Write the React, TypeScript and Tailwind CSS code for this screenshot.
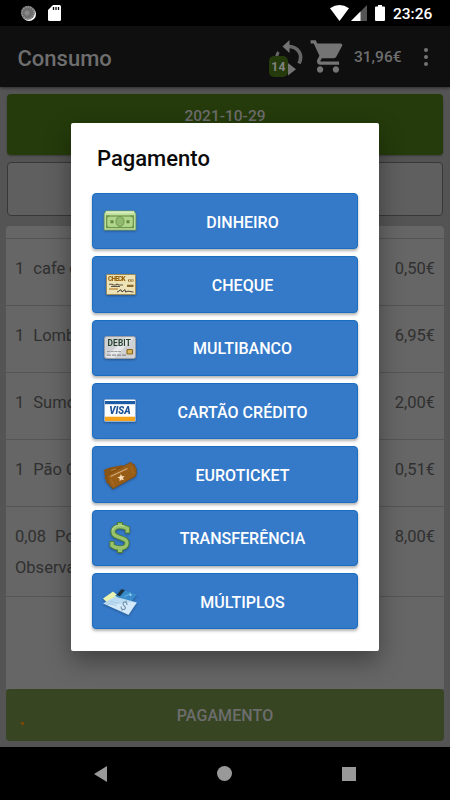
import type { ReactNode } from "react";

type Item = {
  qty: string;
  name: string;
  price: string;
  note?: string;
};

const items: Item[] = [
  { qty: "1", name: "cafe c", price: "0,50€" },
  { qty: "1", name: "Lombo", price: "6,95€" },
  { qty: "1", name: "Sumo", price: "2,00€" },
  { qty: "1", name: "Pão C", price: "0,51€" },
  { qty: "0,08", name: "Polvo", price: "8,00€", note: "Observação" },
];

const PayIcon = ({ children }: { children: ReactNode }) => (
  <svg width="36" height="36" viewBox="0 0 36 36" className="shrink-0 drop-shadow-[0_1px_1px_rgba(0,0,0,0.3)]">
    {children}
  </svg>
);

const CashIcon = () => (
  <PayIcon>
    <path d="M4 8h28l1.800 3v16H2.200V11z" fill="#c3e2a2" stroke="#7fa860" strokeWidth="0.8" />
    <path d="M4 9.200h28" stroke="#d9efc0" strokeWidth="1.600" />
    <rect x="4.600" y="13" width="26.800" height="11.600" fill="#b0d58b" stroke="#6d984d" strokeWidth="1.300" />
    <path d="M4.500 12.500h3.500l-3.500 3zM31.500 12.500H28l3.500 3zM4.500 25H8l-3.500-3zM31.500 25H28l3.500-3z" fill="#6d984d" />
    <ellipse cx="18" cy="18.500" rx="4" ry="5" fill="#91b970" stroke="#6d984d" />
    <path d="M8.500 17.200h3v3h-3zM24.500 17.200h3v3h-3z" fill="#5f8943" />
  </PayIcon>
);

const CheckIcon = () => (
  <PayIcon>
    <rect x="4.500" y="7.500" width="29" height="20" rx="0.800" fill="#eee2b7" stroke="#a18b55" />
    <text x="6" y="14" fontSize="6.300" fontWeight="900" textLength="17.500" fill="#955f08" fontFamily="Roboto, sans-serif">
      CHECK
    </text>
    <path d="M26 13.500h5.500M25 18.800h6.500" stroke="#8a692d" strokeWidth="2.200" />
    <path d="M27 13.500h1.200M29.500 13.500h1.200" stroke="#eee2b7" />
    <path d="M7 17.200h3l1 .8h3l1-.8 2 .8h4M9 19.500h9" stroke="#5d5445" strokeWidth="1.100" fill="none" />
    <path d="M7 22h9" stroke="#b68434" strokeWidth="1.200" />
    <path d="M15 25.200l4-2.500 1 2.200 3-2.300.5 2.500 2.500-1 5.500 1" stroke="#47423a" fill="none" />
  </PayIcon>
);

const DebitIcon = () => (
  <PayIcon>
    <rect x="2.500" y="6.500" width="31" height="22" rx="2" fill="#d0d1d5" stroke="#9a9ea5" />
    <path d="M4 27L24 7.500h8L12 28z" fill="#e7e8e9" />
    <text x="5.500" y="15.500" fontSize="8.300" fontWeight="700" textLength="23.500" fill="#26432f" fontFamily="Roboto, sans-serif">
      DEBIT
    </text>
    <path d="M5 21.500h14" stroke="#9a9b9d" strokeWidth="1.200" strokeDasharray="3 .7" />
    <path d="M5 25.200h19" stroke="#8d8e91" strokeWidth="1.200" strokeDasharray="4 1" />
    <rect x="25" y="19.500" width="5.500" height="4.500" rx="0.800" fill="#d8b65b" stroke="#8a691f" strokeWidth="1.200" />
  </PayIcon>
);

const VisaIcon = () => (
  <PayIcon>
    <rect x="2.500" y="6.500" width="31" height="22" rx="1" fill="#fff" stroke="#8fb0d8" strokeWidth="0.800" />
    <path d="M3 8h30v3.200H3z" fill="#1c5ba5" />
    <path d="M3 23.700h30v4.300H3z" fill="#f6a21a" />
    <text x="7.200" y="21.300" fontSize="10.500" fontWeight="900" fontStyle="italic" textLength="21.500" lengthAdjust="spacingAndGlyphs" fill="#1d5297" fontFamily="Roboto, sans-serif">
      VISA
    </text>
  </PayIcon>
);

const TicketIcon = () => (
  <PayIcon>
    <path
      d="M1.500 13L8 10.500 21 8l2 14-16 5-2.500-1-.5-3-1.500-1.500 1-2.500-1.500-1.500 1-2z"
      fill="#8a5412"
    />
    <path
      d="M5.500 18L29 5l1.500 2.200 2 .3L33 10l1.500 1.500-.5 2.500 1 2-1.500 1.500.5 1.500L10.500 32l-1-2.500-2-.5V26.500L6 25l.5-2.500-1.500-2z"
      fill="#985d16"
      stroke="#7a470c"
      strokeWidth="0.600"
    />
    <path d="M9 13.500l5-1.500" stroke="#b9803a" />
    <path d="M8.500 19.500l17-8" stroke="#d0aa78" strokeWidth="1.200" />
    <path d="M9 22l3 7M29 9.500l2.500 7" stroke="#ad6f26" strokeWidth="0.800" />
    <path d="M18.800 17l1.200 2.300 2.600-.4-1.700 2 1.100 2.400-2.500-.8-1.900 1.800v-2.700l-2.300-1.200 2.600-.8z" fill="#f8dfba" />
  </PayIcon>
);

const DollarIcon = () => (
  <PayIcon>
    <g fill="none">
      <path d="M18 2v5M18 28v5" stroke="#527f35" strokeWidth="6" />
      <path d="M25.500 13.500V8.500c-2-1.200-4.500-2-7.500-2-4.500 0-7 2-7 5.300 0 7 14 4.700 14 11.200 0 3.300-3 5-7 5-3 0-6-.8-8-2.500v-4.500" stroke="#527f35" strokeWidth="5.200" />
      <path d="M18 3v5M18 27v5" stroke="#98c36d" strokeWidth="4" />
      <path d="M25.500 12.500V8.500c-2-1.200-4.500-2-7.500-2-4.500 0-7 2-7 5.300 0 7 14 4.700 14 11.200 0 3.300-3 5-7 5-3 0-6-.8-8-2.500v-3.500" stroke="#98c36d" strokeWidth="3.400" />
      <path d="M22 6c-6-1.500-11 0-11.500 4.500" stroke="#bedc9c" />
    </g>
  </PayIcon>
);

const MultipleIcon = () => (
  <PayIcon>
    <path d="M1 15.500l10-7 5 4-10 8z" fill="#e8f2b1" />
    <path d="M13 13l6.500-7L35 11.500l-6 7.500z" fill="#378bcb" />
    <path d="M14.500 12l5-6 3.500 1.300-5 6z" fill="#1d3343" />
    <path d="M22 14l7-4" stroke="#68b6e5" />
    <circle cx="28.500" cy="12" r="1.100" fill="#a6daf2" />
    <path d="M1 20.500l12-7 22 6L26.500 32z" fill="#b9daf0" />
    <path d="M6 22.500L30 19l4 .8L26.500 31z" fill="#d4eafa" />
    <path d="M8 18l9 2.500M6 20l9 3" stroke="#a3c5de" strokeWidth="0.700" />
    <text x="18.500" y="27" fontSize="12" fill="#6f91aa" fontFamily="Roboto, sans-serif" transform="rotate(24 22 23)">
      $
    </text>
  </PayIcon>
);

const payments = [
  { label: "DINHEIRO", icon: <CashIcon /> },
  { label: "CHEQUE", icon: <CheckIcon /> },
  { label: "MULTIBANCO", icon: <DebitIcon /> },
  { label: "CARTÃO CRÉDITO", icon: <VisaIcon /> },
  { label: "EUROTICKET", icon: <TicketIcon /> },
  { label: "TRANSFERÊNCIA", icon: <DollarIcon /> },
  { label: "MÚLTIPLOS", icon: <MultipleIcon /> },
];

const StatusBar = () => (
  <div className="flex h-[26px] items-center bg-black pl-[20px] pr-[17px] text-white">
    <svg width="17" height="17" viewBox="0 0 17 17">
      <circle cx="9" cy="9" r="7" fill="#fff" />
      <circle cx="7.900" cy="7.800" r="7" fill="#6e6e6e" />
      <circle cx="7.900" cy="7.800" r="6" fill="none" stroke="#999" strokeWidth="1.500" strokeDasharray="1.200 1.300" />
      <circle cx="7" cy="8" r="2.500" fill="#888" />
    </svg>
    <svg width="13" height="16" viewBox="0 0 13 16" className="ml-[11px]">
      <path d="M5 0h6.500Q13 0 13 1.500v13q0 1.500-1.500 1.500h-10Q0 16 0 14.500V5z" fill="#fff" />
      <path d="M5.500 2v3M8 2v3M10.500 2v3" stroke="#000" strokeWidth="1.300" />
    </svg>
    <svg width="19" height="16" viewBox="0 0 19 16" className="ml-auto">
      <path d="M0 3.200Q9.500-3.200 19 3.200L9.500 16z" fill="#fff" />
    </svg>
    <svg width="16" height="16" viewBox="0 0 16 16" className="ml-[2px]">
      <path d="M16 0v16H0z" fill="#555" />
      <path d="M9.500 6.500V16H0z" fill="#fff" />
    </svg>
    <svg width="10" height="16" viewBox="0 0 10 16" className="ml-[8px]">
      <path d="M3 0h4v1.500h2q1 0 1 1V15q0 1-1 1H1q-1 0-1-1V2.500q0-1 1-1h2z" fill="#fff" />
    </svg>
    <span className="ml-[8px] w-[40px] whitespace-nowrap pt-[3px] text-[15.500px] font-medium">23:26</span>
  </div>
);

const AppBar = () => (
  <div className="relative z-10 flex h-[61px] items-center bg-[#0f0f0f] pl-[17.500px] text-[#6e6e6e] shadow-[0_1px_3px_rgba(0,0,0,0.5)]">
    <h1 className="pt-[3px] text-[22px] font-medium">Consumo</h1>
    <div className="relative ml-auto h-[40px] w-[36px]">
      <svg width="36" height="40" viewBox="0 0 36 40" fill="none">
        <path d="M19 9.500c10 0 15.500 8 11 17" stroke="#666" strokeWidth="3.600" />
        <path d="M20.500 3v13L13.500 9.500z" fill="#747474" />
        <path d="M19 26l8 6.200-8 6.300z" fill="#747474" />
        <path d="M9.500 15q-2 2.500-2 6" stroke="#666" strokeWidth="3" />
      </svg>
      <span className="absolute left-0 top-[19px] flex h-[21px] w-[19px] items-center justify-center rounded-[5px] bg-[#253b0b] pt-[2px] text-[12px] font-bold tracking-[0.300px] text-[#838383]">
        14
      </span>
    </div>
    <svg width="38" height="39" viewBox="0 0 24 24" preserveAspectRatio="none" fill="#747474" className="ml-[4px]">
      <path d="M7 18c-1.100 0-1.990.9-1.990 2S5.900 22 7 22s2-.9 2-2-.9-2-2-2zM1 2v2h2l3.600 7.590-1.350 2.450c-.16.28-.25.61-.25.96 0 1.100.9 2 2 2h12v-2H7.420c-.14 0-.25-.11-.25-.25l.03-.12.9-1.630h7.450c.75 0 1.410-.41 1.750-1.030l3.580-6.490c.08-.14.12-.31.12-.48 0-.55-.45-1-1-1H5.210l-.94-2H1zm16 16c-1.100 0-1.990.9-1.990 2s.89 2 1.990 2 2-.9 2-2-.9-2-2-2z" />
    </svg>
    <span className="ml-[7px] w-[48px] whitespace-nowrap pt-[3px] text-[15.500px] font-medium">31,96€</span>
    <div className="ml-[22px] mr-[22px] flex flex-col gap-[3px] pt-px">
      <i className="size-[4px] rounded-full bg-[#747474]" />
      <i className="size-[4px] rounded-full bg-[#747474]" />
      <i className="size-[4px] rounded-full bg-[#747474]" />
    </div>
  </div>
);

const ItemRow = ({ item }: { item: Item }) => (
  <div
    className={
      item.note
        ? "h-[90px] border-b border-[#555] px-[9px] pt-[15.500px]"
        : "h-[67px] border-b border-[#555] px-[9px] pt-[15.500px]"
    }
  >
    <div className="flex h-[30px] items-center">
      <span>{item.qty}</span>
      <span className="ml-[9px]">{item.name}</span>
      <span className="ml-auto">{item.price}</span>
    </div>
    {item.note && <div className="flex h-[31px] items-center">{item.note}</div>}
  </div>
);

const PaymentDialog = () => (
  <div className="absolute left-[71px] top-[123px] z-20 h-[528px] w-[308px] rounded-[2px] bg-white px-[21px] shadow-[0_10px_24px_rgba(0,0,0,0.36)]">
    <h2 className="flex h-[70px] items-center pl-[5px] text-[22px] font-medium text-[#0a0a0a]">Pagamento</h2>
    <div className="flex flex-col gap-[7px]">
      {payments.map((p) => (
        <button
          key={p.label}
          className="flex h-[56.350px] w-[266px] items-center rounded-[4px] border border-[#1a6ec2] bg-[#3579c9] pl-[9px] pr-[10px] text-white shadow-[0_2px_3px_rgba(0,0,0,0.3)]"
        >
          {p.icon}
          <span className="flex-1 pt-[3px] text-center text-[16px] font-medium">{p.label}</span>
        </button>
      ))}
    </div>
  </div>
);

const NavBar = () => (
  <div className="flex h-[53px] items-center bg-black pl-[94px] pr-[94px]">
    <svg width="13" height="16" viewBox="0 0 13 16">
      <path d="M13 0v16L0 8z" fill="#999" />
    </svg>
    <i className="ml-[110px] size-[15px] rounded-full bg-[#999]" />
    <i className="ml-auto size-[14px] bg-[#999]" />
  </div>
);

export default function App() {
  return (
    <div className="relative flex h-[800px] w-[450px] flex-col overflow-hidden bg-[#545454] font-['Roboto',sans-serif]">
      <StatusBar />
      <AppBar />
      <main className="flex h-[660px] flex-col px-[6px] pt-[7px]">
        <button className="mx-px flex h-[61px] justify-center rounded-[4px] bg-[#253b0b] pt-[11px] text-[15.500px] font-medium text-[#6c6c6c] shadow-[0_1px_2px_rgba(0,0,0,0.3)]">
          2021-10-29
        </button>
        <div className="mx-px mt-[7px] h-[54px] rounded-[4px] border border-[#383838] bg-[#5f5f5f]" />
        <div className="mt-[10px] h-[463px] rounded-t-[4px] bg-[#666] text-[16.500px] text-[#303030]">
          <div className="h-[13px] border-b border-[#555]" />
          {items.map((item) => (
            <ItemRow key={item.name} item={item} />
          ))}
        </div>
        <button className="relative flex h-[52px] items-center justify-center rounded-[4px] bg-[#374523] pt-[2px] text-[16px] font-medium tracking-[0.1px] text-[#6d6d6d]">
          <i className="absolute left-[15px] top-[33px] size-[3px] rotate-45 bg-[#804800]" />
          PAGAMENTO
        </button>
      </main>
      <NavBar />
      <PaymentDialog />
    </div>
  );
}
